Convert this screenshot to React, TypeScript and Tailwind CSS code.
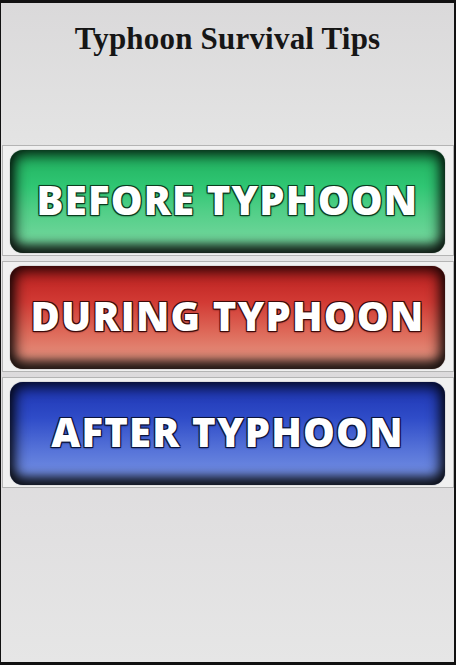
import React from "react";

const rows = [
  {
    label: "BEFORE TYPHOON",
    bg: "bg-[linear-gradient(180deg,#1fae5c_0%,#2fc673_35%,#52cf88_60%,#7ed8a3_100%)]",
    shadow: "[text-shadow:0_0_2px_#0b3d1f,1px_1px_0_#0b3d1f,-1px_-1px_0_#0b3d1f,1px_-1px_0_#0b3d1f,-1px_1px_0_#0b3d1f,0_1px_2px_#0b3d1f]",
  },
  {
    label: "DURING TYPHOON",
    bg: "bg-[linear-gradient(180deg,#b81d1d_0%,#d23a34_35%,#de6a5a_65%,#e6a08c_100%)]",
    shadow: "[text-shadow:0_0_2px_#3d0b0b,1px_1px_0_#3d0b0b,-1px_-1px_0_#3d0b0b,1px_-1px_0_#3d0b0b,-1px_1px_0_#3d0b0b,0_1px_2px_#3d0b0b]",
  },
  {
    label: "AFTER TYPHOON",
    bg: "bg-[linear-gradient(180deg,#1b32b0_0%,#2f4cc8_35%,#5572d8_65%,#7c98e6_100%)]",
    shadow: "[text-shadow:0_0_2px_#0b143d,1px_1px_0_#0b143d,-1px_-1px_0_#0b143d,1px_-1px_0_#0b143d,-1px_1px_0_#0b143d,0_1px_2px_#0b143d]",
  },
];

export default function App() {
  return (
    <div className="w-[456px] h-[665px] bg-[#111] pt-[3px] pl-[1px] pr-[2px] pb-[3px]">
      <div className="w-full h-full flex flex-col bg-[linear-gradient(180deg,#dad9da_0%,#e3e3e3_20%,#e9e9e9_30%,#dbd9db_60%,#e6e6e6_100%)]">
        <div className="h-[142px] flex justify-center pt-[17px]">
          <h1 className="font-['Liberation_Serif',serif] font-bold text-[31px] leading-[38px] text-[#161616] tracking-[0.2px]">
            Typhoon Survival Tips
          </h1>
        </div>
        <div className="flex flex-col gap-[5px] pl-[1px] pr-0">
          {rows.map((r) => (
            <div
              key={r.label}
              className="h-[111px] border border-[#b4b4b4] bg-[#f0f0f0] pl-[7px] pr-[8px] pt-[4px] pb-[2px]"
            >
              <div
                className={`h-[103px] rounded-[13px] flex items-center justify-center pb-[3px] ${r.bg} shadow-[inset_0_0_14px_5px_rgba(0,0,0,0.85),inset_0_-8px_10px_rgba(0,0,0,0.55),0_0_1px_rgba(0,0,0,0.8)]`}
              >
                <span
                  className={`font-['Open_Sans',sans-serif] font-extrabold text-[40px] text-white tracking-[1.2px] leading-none ${r.shadow}`}
                >
                  {r.label}
                </span>
              </div>
            </div>
          ))}
        </div>
      </div>
    </div>
  );
}
